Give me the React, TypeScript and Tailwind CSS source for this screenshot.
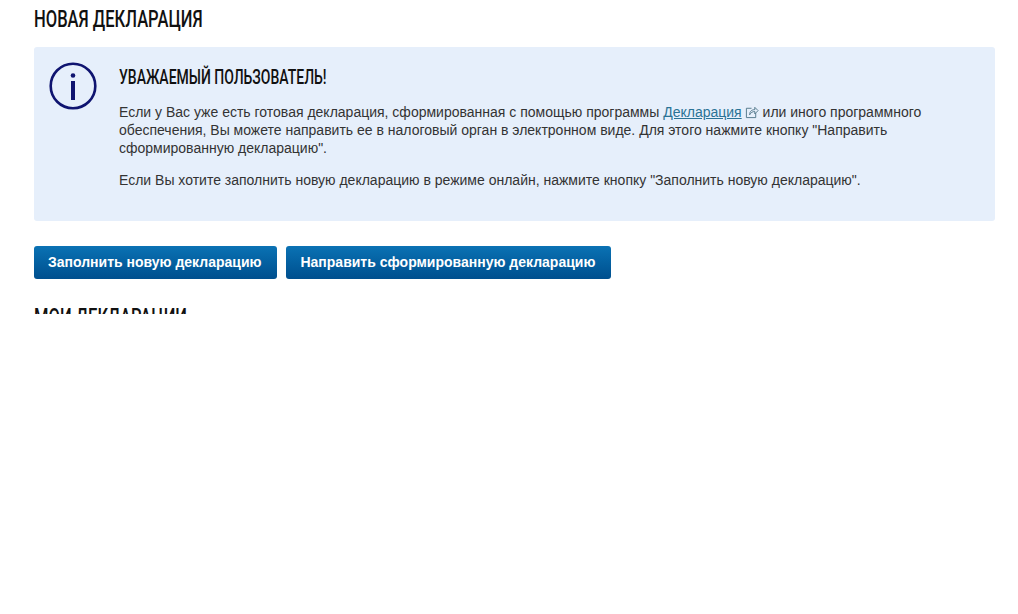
const headingClass = "font-['Roboto',sans-serif] font-medium text-[#111] uppercase origin-left whitespace-nowrap";

const InfoIcon = () => (
  <svg width="48" height="48" viewBox="0 0 48 48" fill="none" className="shrink-0">
    <circle cx="24" cy="24" r="22.3" stroke="#0f1470" strokeWidth="2.6" />
    <circle cx="24" cy="13.5" r="2.3" fill="#0f1470" />
    <rect x="22" y="19" width="4" height="19" fill="#0f1470" />
  </svg>
);

const ExternalIcon = () => (
  <svg width="14" height="14" viewBox="0 0 15 15" fill="none" stroke="#4f7488" strokeWidth="1" className="inline-block align-[-2px] ml-[3px]">
    <path d="M11.5 8.5v5h-10v-10H7" />
    <path d="M5 10.5c0-4 2.4-5.5 5.5-5.5V2.5l3.5 3.5-3.5 3.5V7c-2.4 0-4.2 1-5.5 3.5z" />
  </svg>
);

const Button = ({ children }: { children: React.ReactNode }) => (
  <button className="h-[33px] pl-[14px] pr-[16px] rounded-[3px] bg-gradient-to-b from-[#0b72b4] to-[#004f8e] text-white text-[14px] font-bold">
    {children}
  </button>
);

export default function App() {
  return (
    <div className="h-[614px] bg-white font-['Liberation_Sans',Arial,sans-serif] text-[#333]">
      <div className="h-[314px] overflow-hidden px-[34px] pt-[7px]">
        <h1 className={`${headingClass} text-[23px] leading-[26px] scale-x-[0.72]`}>Новая декларация</h1>

        <div className="mt-[14px] w-[961px] h-[174px] rounded-[3px] bg-[#e6effb] flex pl-[15px] pt-[15px] gap-[22px]">
          <InfoIcon />
          <div className="w-[830px]">
            <h2 className={`${headingClass} text-[20px] leading-[24px] mt-[3px] scale-x-[0.7]`}>Уважаемый пользователь!</h2>
            <p className="mt-[14px] text-[14px] leading-[18px]">
              Если у Вас уже есть готовая декларация, сформированная с помощью программы{' '}
              <a className="text-[#2a7396] underline">Декларация</a>
              <ExternalIcon /> или иного программного обеспечения, Вы можете направить ее в налоговый орган в электронном виде. Для этого нажмите кнопку "Направить сформированную декларацию".
            </p>
            <p className="mt-[14px] text-[14px] leading-[18px]">
              Если Вы хотите заполнить новую декларацию в режиме онлайн, нажмите кнопку "Заполнить новую декларацию".
            </p>
          </div>
        </div>

        <div className="mt-[25px] flex gap-[9px]">
          <Button>Заполнить новую декларацию</Button>
          <Button>Направить сформированную декларацию</Button>
        </div>

        <h1 className={`${headingClass} mt-[26px] text-[23px] leading-[26px] scale-x-[0.72]`}>Мои декларации</h1>
      </div>
    </div>
  );
}
